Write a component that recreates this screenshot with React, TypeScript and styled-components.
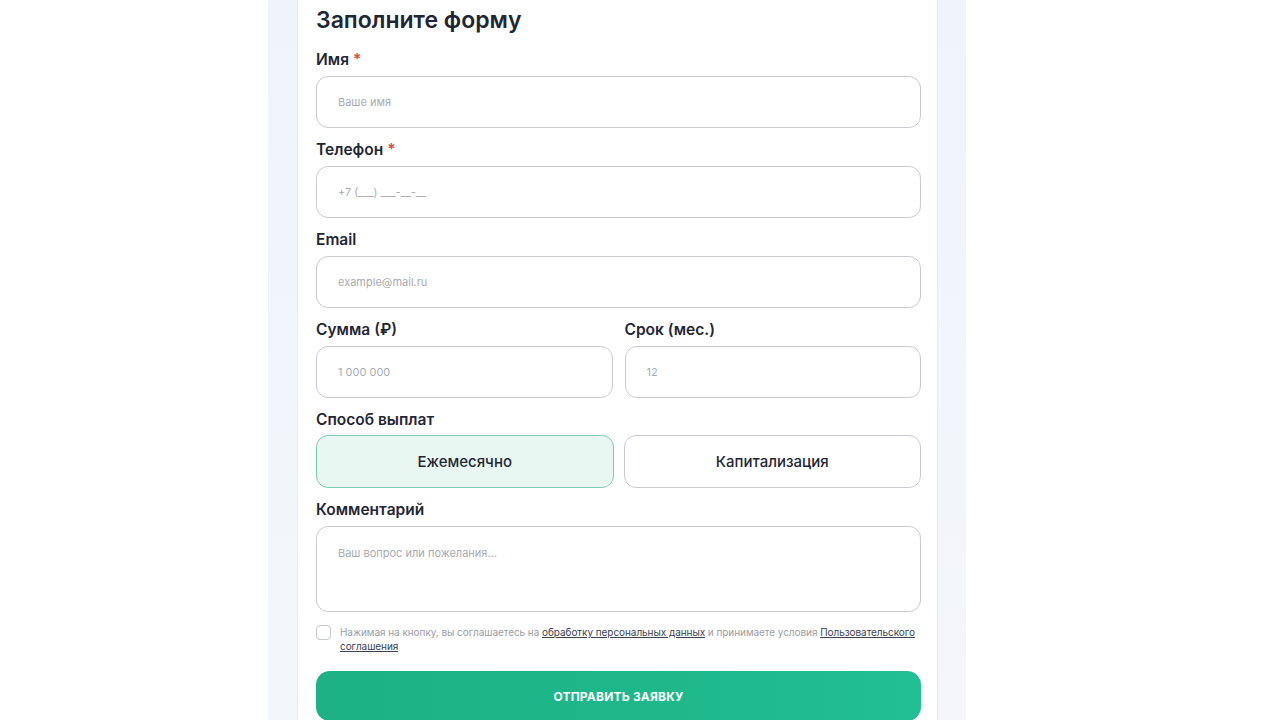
import { useState } from 'react';
import styled, { createGlobalStyle } from 'styled-components';

const GlobalStyle = createGlobalStyle`
  html, body {
    margin: 0;
    padding: 0;
    background: #ffffff;
    font-family: Inter, "Noto Sans", Arial, sans-serif;
    color: #1f2937;
    overflow: hidden;
  }
  * {
    box-sizing: border-box;
  }
`;

const Page = styled.div`
  width: 1280px;
  height: 720px;
  display: flex;
  padding-left: 268px;
  overflow: hidden;
  background: #ffffff;
`;

const Section = styled.div`
  width: 698px;
  padding: 0 28px 0 29px;
  background: linear-gradient(180deg, #eff4fb 0%, #f3f7fb 100%);
  display: flex;
  flex-direction: column;
`;

const Card = styled.form`
  margin-top: -25px;
  background: #ffffff;
  border: 1px solid #e6ebf1;
  border-radius: 20px;
  padding: 30px 16px 24px 18px;
  display: flex;
  flex-direction: column;
`;

const Title = styled.h2`
  margin: 0 0 17px 0;
  font-size: 23px;
  line-height: 28px;
  font-weight: 600;
  color: #1e2733;
`;

const Field = styled.div`
  display: flex;
  flex-direction: column;
  margin-bottom: 13px;
  min-width: 0;
`;

const Label = styled.label`
  font-size: 15.5px;
  line-height: 18px;
  font-weight: 600;
  color: #1f2733;
  margin-bottom: 7px;
`;

const Required = styled.span`
  color: #d84a4a;
  margin-left: 4px;
`;

const Input = styled.input`
  width: 100%;
  height: 52px;
  border: 1.5px solid #c7cacf;
  border-radius: 12px;
  padding: 0 21px;
  font-family: inherit;
  font-size: 11px;
  color: #374151;
  background: #ffffff;
  outline: none;

  &::placeholder {
    color: #a8abb1;
  }
`;

const TextArea = styled.textarea`
  width: 100%;
  height: 86px;
  border: 1.5px solid #c7cacf;
  border-radius: 12px;
  padding: 19px 21px;
  font-family: inherit;
  font-size: 11px;
  resize: none;
  outline: none;

  &::placeholder {
    color: #a8abb1;
  }
`;

const Row = styled.div`
  display: grid;
  grid-template-columns: 1fr 1fr;
  column-gap: 12px;
`;

const ToggleRow = styled.div`
  display: grid;
  grid-template-columns: 1fr 1fr;
  column-gap: 10px;
  margin-top: -1px;
`;

const Toggle = styled.button<{ $active: boolean }>`
  height: 53px;
  border-radius: 12px;
  border: 1.5px solid ${({ $active }) => ($active ? '#7fcbb5' : '#c7cacf')};
  background: ${({ $active }) => ($active ? '#e9f7f3' : '#ffffff')};
  font-family: inherit;
  font-size: 15px;
  font-weight: 500;
  color: #1f2733;
  cursor: pointer;
`;

const Consent = styled.div`
  display: flex;
  align-items: flex-start;
  gap: 9px;
  margin-bottom: 18px;
`;

const Checkbox = styled.span`
  flex: none;
  width: 15px;
  height: 15px;
  border: 1.5px solid #c4c7cc;
  border-radius: 4px;
  background: #ffffff;
`;

const ConsentText = styled.p`
  margin: 0;
  font-size: 10px;
  line-height: 14px;
  letter-spacing: -0.06px;
  color: #9a9ea5;
`;

const ConsentLink = styled.a`
  color: #3b4350;
  text-decoration: underline;
`;

const Submit = styled.button`
  height: 50px;
  width: 100%;
  border: none;
  border-radius: 14px;
  background: linear-gradient(90deg, #1db185 0%, #1eb88b 60%, #21bf93 100%);
  color: #ffffff;
  font-family: inherit;
  font-size: 12px;
  font-weight: 700;
  letter-spacing: 0.2px;
  text-transform: uppercase;
  cursor: pointer;
`;

export default function App() {
  const [payout, setPayout] = useState<'monthly' | 'capital'>('monthly');

  return (
    <Page>
      <GlobalStyle />
      <Section>
        <Card onSubmit={(e) => e.preventDefault()}>
          <Title>Заполните форму</Title>

          <Field>
            <Label>
              Имя<Required>*</Required>
            </Label>
            <Input placeholder="Ваше имя" />
          </Field>

          <Field>
            <Label>
              Телефон<Required>*</Required>
            </Label>
            <Input placeholder="+7 (___) ___-__-__" />
          </Field>

          <Field>
            <Label>Email</Label>
            <Input placeholder="example@mail.ru" />
          </Field>

          <Row>
            <Field>
              <Label>Сумма (₽)</Label>
              <Input placeholder="1 000 000" />
            </Field>
            <Field>
              <Label>Срок (мес.)</Label>
              <Input placeholder="12" />
            </Field>
          </Row>

          <Field>
            <Label>Способ выплат</Label>
            <ToggleRow>
              <Toggle type="button" $active={payout === 'monthly'} onClick={() => setPayout('monthly')}>
                Ежемесячно
              </Toggle>
              <Toggle type="button" $active={payout === 'capital'} onClick={() => setPayout('capital')}>
                Капитализация
              </Toggle>
            </ToggleRow>
          </Field>

          <Field>
            <Label>Комментарий</Label>
            <TextArea placeholder="Ваш вопрос или пожелания..." />
          </Field>

          <Consent>
            <Checkbox />
            <ConsentText>
              Нажимая на кнопку, вы соглашаетесь на <ConsentLink href="#">обработку персональных данных</ConsentLink> и
              принимаете условия <ConsentLink href="#">Пользовательского соглашения</ConsentLink>
            </ConsentText>
          </Consent>

          <Submit type="submit">Отправить заявку</Submit>
        </Card>
      </Section>
    </Page>
  );
}
